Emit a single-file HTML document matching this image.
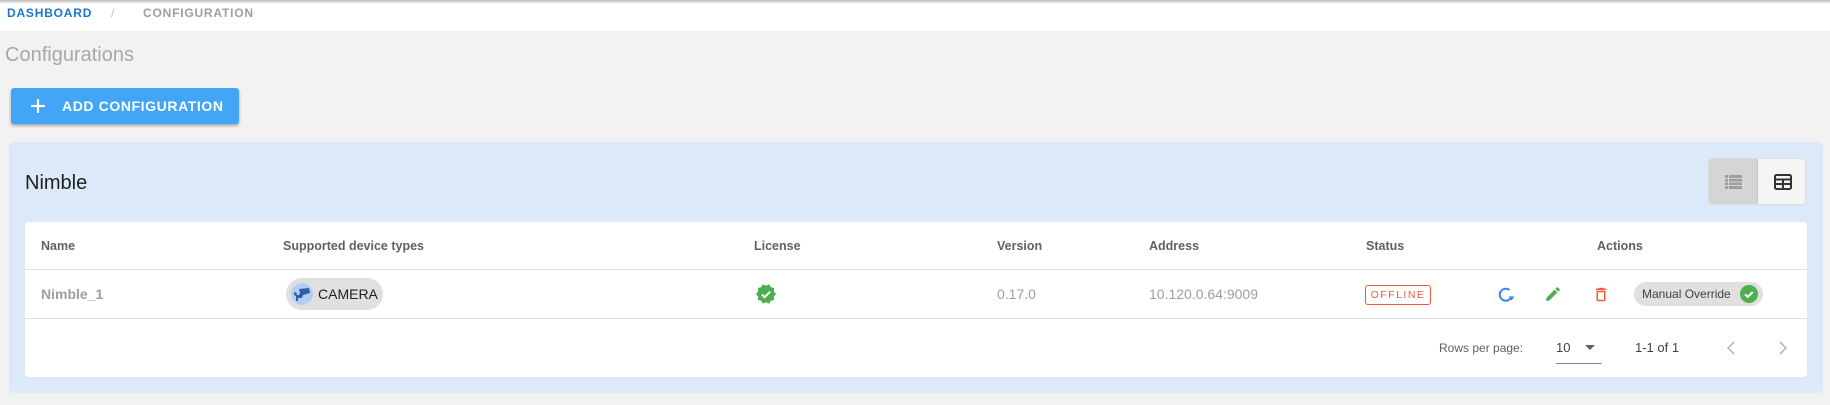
<!DOCTYPE html>
<html><head><meta charset="utf-8"><style>
*{box-sizing:border-box;margin:0;padding:0}
body{width:1830px;height:405px;background:#f2f2f2;font-family:"Liberation Sans",sans-serif;position:relative;overflow:hidden}
.abs{position:absolute}
.top{left:0;top:0;width:1830px;height:31px;background:#fff}
.shd{left:0;top:0;width:1830px;height:4px;background:linear-gradient(#bbb,rgba(255,255,255,0))}
.bc{font-size:12px;font-weight:bold;letter-spacing:.8px;top:6px}
.btn{left:11px;top:88px;width:228px;height:36px;background:#42a5f5;border-radius:3px;box-shadow:0 2px 3px rgba(0,0,0,.3);color:#fff;font-weight:bold;font-size:14px;letter-spacing:.6px}
.panel{left:9px;top:142px;width:1814px;height:251px;background:#dbe9f8;border-radius:4px}
.card{left:25px;top:222px;width:1782px;height:155px;background:#fff;border-radius:4px}
.th{font-size:12.5px;color:#616161;font-weight:bold;top:239px}
.td{font-size:14px;color:#9e9e9e;top:286px}
.line{left:25px;width:1782px;height:1px;background:#e0e0e0}
</style></head><body>
<div class="abs top"></div>
<div class="abs shd"></div>
<div class="abs bc" style="left:7px;color:#1976d2">DASHBOARD</div>
<div class="abs bc" style="left:111px;color:#bbb;font-weight:normal">/</div>
<div class="abs bc" style="left:143px;color:#9e9e9e">CONFIGURATION</div>
<div class="abs" style="left:5px;top:44px;font-size:20px;color:#a8a8a8">Configurations</div>
<div class="abs btn">
 <svg class="abs" style="left:19px;top:10px" width="16" height="16" viewBox="0 0 16 16"><path d="M8 1v14M1 8h14" stroke="#fff" stroke-width="2.2"/></svg>
 <span class="abs" style="left:51px;top:10px">ADD CONFIGURATION</span>
</div>
<div class="abs panel"></div>
<div class="abs" style="left:25px;top:172px;font-size:20px;color:#212121">Nimble</div>
<div class="abs" style="left:1708px;top:158px;width:98px;height:47px;border:1px solid #ddd;border-radius:4px;overflow:hidden;background:#f5f5f5">
 <div class="abs" style="left:0;top:0;width:49px;height:47px;background:#d5d5d5;border-right:1px solid #c8c8c8"></div>
 <svg class="abs" style="left:16px;top:15px" width="18" height="16" viewBox="0 0 18 16"><g fill="#9e9e9e"><rect x="0" y="1" width="3" height="3"/><rect x="4" y="1" width="13" height="3"/><rect x="0" y="5" width="3" height="2.5"/><rect x="4" y="5" width="13" height="2.5"/><rect x="0" y="8.5" width="3" height="2.5"/><rect x="4" y="8.5" width="13" height="2.5"/><rect x="0" y="12" width="3" height="3"/><rect x="4" y="12" width="13" height="3"/></g></svg>
 <svg class="abs" style="left:65px;top:15px" width="18" height="16" viewBox="0 0 18 16"><rect x="1" y="1" width="16" height="14" rx="1.5" fill="none" stroke="#333" stroke-width="2"/><path d="M1 5.5h16M9 5.5v9M1 10h16" stroke="#333" stroke-width="2"/></svg>
</div>
<div class="abs card"></div>
<div class="abs th" style="left:41px">Name</div>
<div class="abs th" style="left:283px">Supported device types</div>
<div class="abs th" style="left:754px">License</div>
<div class="abs th" style="left:997px">Version</div>
<div class="abs th" style="left:1149px">Address</div>
<div class="abs th" style="left:1366px">Status</div>
<div class="abs th" style="left:1597px">Actions</div>
<div class="abs line" style="top:269px"></div>
<div class="abs line" style="top:318px"></div>
<div class="abs td" style="left:41px;font-weight:bold">Nimble_1</div>
<div class="abs" style="left:286px;top:278px;width:97px;height:32px;border-radius:16px;background:#e0e0e0">
 <div class="abs" style="left:5px;top:5px;width:22px;height:22px;border-radius:11px;background:#b3cdf3"></div>
 <svg class="abs" style="left:7px;top:8px" width="18" height="16" viewBox="0 0 18 16"><path d="M6 3l10-1 1 5-7 2-1 3H5v3H3V9h3l1-2z" fill="#2f5fa8"/><path d="M1 6l3 1-1 3-2-1z" fill="#2f5fa8"/></svg>
 <span class="abs" style="left:32px;top:8px;font-size:14px;color:#212121">CAMERA</span>
</div>
<svg class="abs" style="left:755px;top:283px" width="22" height="22" viewBox="0 0 24 24"><path d="M23 12l-2.44-2.79.34-3.69-3.61-.82-1.89-3.2L12 2.96 8.6 1.5 6.71 4.69 3.1 5.5l.34 3.7L1 12l2.44 2.79-.34 3.7 3.61.82L8.6 22.5l3.4-1.47 3.4 1.46 1.89-3.19 3.61-.82-.34-3.69z" fill="#4caf50"/><path d="M7.5 12.5l3 3 6-6" stroke="#fff" stroke-width="2.2" fill="none"/></svg>
<div class="abs td" style="left:997px">0.17.0</div>
<div class="abs td" style="left:1149px">10.120.0.64:9009</div>
<div class="abs" style="left:1365px;top:285px;width:66px;height:20px;border:1px solid #f05a3a;border-radius:3px;color:#f05a3a;font-size:10.5px;letter-spacing:1.5px;text-align:center;line-height:18px">OFFLINE</div>
<svg class="abs" style="left:1497px;top:286px" width="18" height="18" viewBox="0 0 18 18"><path d="M14.5 10.5A6 6 0 1 1 12.5 4" stroke="#3b82f6" stroke-width="2" fill="none"/><path d="M11.5 10.5h6l-3 4z" fill="#3b82f6"/></svg>
<svg class="abs" style="left:1544px;top:285px" width="18" height="18" viewBox="0 0 24 24"><path d="M3 17.25V21h3.75L17.81 9.94l-3.75-3.75zM20.71 7.04a1 1 0 0 0 0-1.41l-2.34-2.34a1 1 0 0 0-1.41 0l-1.83 1.83 3.75 3.75z" fill="#4caf50"/></svg>
<svg class="abs" style="left:1592px;top:285px" width="18" height="19" viewBox="0 0 24 24"><path d="M6 19a2 2 0 0 0 2 2h8a2 2 0 0 0 2-2V7H6zm2-10h8v10H8zm7.5-5-1-1h-5l-1 1H5v2h14V4z" fill="#f05a3a"/></svg>
<div class="abs" style="left:1634px;top:282px;width:129px;height:24px;border-radius:12px;background:#e0e0e0">
 <span class="abs" style="left:8px;top:5px;font-size:12px;color:#424242">Manual Override</span>
 <svg class="abs" style="left:106px;top:3px" width="18" height="18" viewBox="0 0 18 18"><circle cx="9" cy="9" r="9" fill="#4caf50"/><path d="M5 9.3l2.7 2.7 5-5" stroke="#fff" stroke-width="2" fill="none"/></svg>
</div>
<div class="abs" style="left:1439px;top:341px;font-size:12px;color:#616161">Rows per page:</div>
<div class="abs" style="left:1556px;top:340px;font-size:13px;color:#424242">10</div>
<svg class="abs" style="left:1584px;top:345px" width="12" height="6" viewBox="0 0 12 6"><path d="M1 0h10L6 5z" fill="#616161"/></svg>
<div class="abs" style="left:1556px;top:363px;width:46px;height:1px;background:#888"></div>
<div class="abs" style="left:1635px;top:340px;font-size:13px;color:#424242">1-1 of 1</div>
<svg class="abs" style="left:1726px;top:340px" width="10" height="16" viewBox="0 0 10 16"><path d="M8 2L2 8l6 6" stroke="#bbb" stroke-width="1.6" fill="none"/></svg>
<svg class="abs" style="left:1778px;top:340px" width="10" height="16" viewBox="0 0 10 16"><path d="M2 2l6 6-6 6" stroke="#bbb" stroke-width="1.6" fill="none"/></svg>
</body></html>
